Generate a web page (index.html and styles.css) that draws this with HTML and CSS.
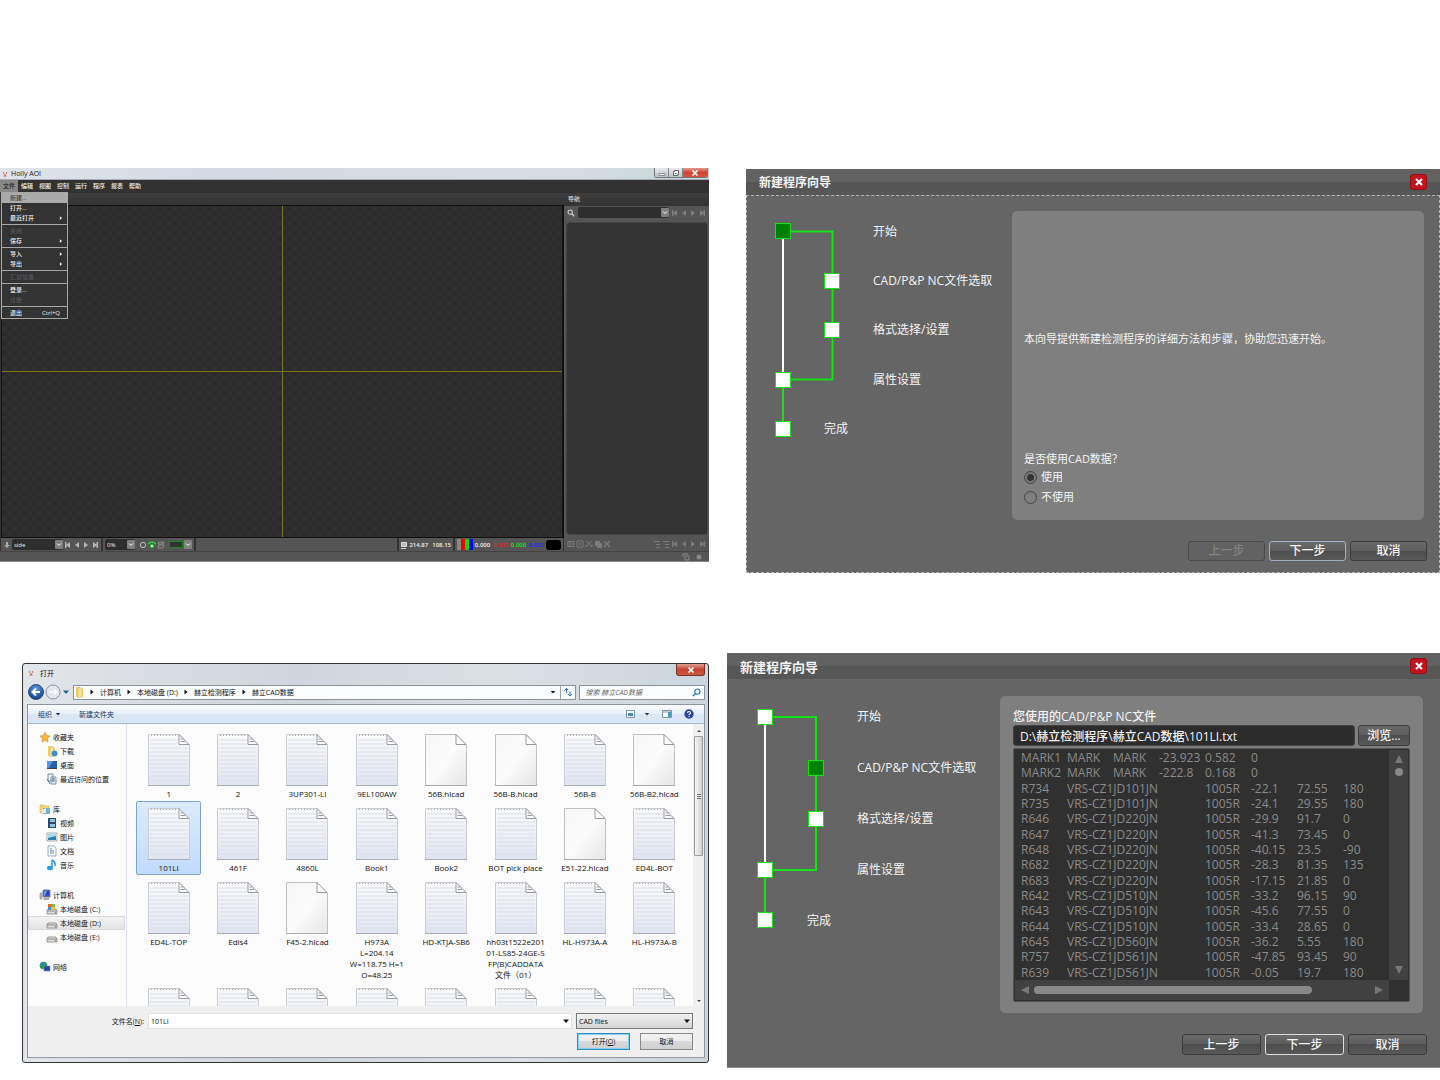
FILE: index.html
```html
<!DOCTYPE html>
<html lang="zh-CN">
<head>
<meta charset="utf-8">
<title>Holly AOI</title>
<link rel="stylesheet" href="styles.css">
</head>
<body>
<svg class="defs" width="0" height="0" aria-hidden="true">
  <defs>
    <linearGradient id="paper" x1="0" y1="0" x2="0" y2="1"><stop offset="0" stop-color="#fafafa"/><stop offset=".6" stop-color="#eceef4"/><stop offset="1" stop-color="#dfe4f1"/></linearGradient>
    <linearGradient id="blank" x1="0" y1="0" x2="1" y2="1"><stop offset="0" stop-color="#f6f6f6"/><stop offset=".5" stop-color="#fbfbfb"/><stop offset="1" stop-color="#e6e6e6"/></linearGradient>
    <radialGradient id="orb" cx=".5" cy=".3" r=".7"><stop offset="0" stop-color="#5d9be0"/><stop offset="1" stop-color="#103f86"/></radialGradient>
    <symbol id="doc" viewBox="0 0 42 53">
      <path d="M.5 1.500H31L41.500 12V52.500H.5z" fill="url(#paper)" stroke="#c9ccd2"/>
      <path d="M3 2.500H30" stroke="#a5a9af" stroke-dasharray="1 2"/>
      <path d="M2 7H30M2 11H30M2 15H40M2 19H40M2 23H40M2 27H40M2 31H40M2 35H40M2 39H40M2 43H40M2 47H40" stroke="#d9deea"/>
      <path d="M0 52.500H42" stroke="#a9adb5"/>
      <path d="M31 1.500V11.500H41z" fill="#fff" stroke="#9599a0"/><path d="M32.500 6H35M32.500 8.500H37" stroke="#999"/>
    </symbol>
    <symbol id="file" viewBox="0 0 42 53">
      <path d="M.5 1.500H31L41.500 12V52.500H.5z" fill="url(#blank)" stroke="#c0c0c0"/>
      <path d="M0 52.500H42" stroke="#adadad"/>
      <path d="M31 1.500V11.500H41z" fill="#fff" stroke="#9599a0"/>
    </symbol>
    <symbol id="logo" viewBox="0 0 8 8"><path d="M2 2.500L3 3.500M6 2.500L5 3.500M4 4V6M2.500 6H5.500" stroke="#e4574c" stroke-width="1.100" fill="none"/></symbol>
    <symbol id="down" viewBox="0 0 8 8"><path d="M1 2.500H7L4 6z" fill="currentColor"/></symbol>
    <symbol id="right" viewBox="0 0 8 8"><path d="M2.500 1.500V6.500L5.500 4z" fill="currentColor"/></symbol>
    <symbol id="left" viewBox="0 0 8 8"><path d="M6 1V7L2 4z" fill="currentColor"/></symbol>
    <symbol id="play" viewBox="0 0 8 8"><path d="M2 1V7L6 4z" fill="currentColor"/></symbol>
    <symbol id="first" viewBox="0 0 8 8"><path d="M1 1H2.500V3.500L6 1V7L2.500 4.500V7H1z" fill="currentColor"/></symbol>
    <symbol id="last" viewBox="0 0 8 8"><path d="M7 1H5.500V3.500L2 1V7L5.500 4.500V7H7z" fill="currentColor"/></symbol>
    <symbol id="drop" viewBox="0 0 8 11"><rect y="1" width="8" height="9" rx="1" fill="#808080"/><path d="M2 4.500L4 6.500L6 4.500" stroke="#fff" fill="none"/></symbol>
    <symbol id="lens" viewBox="0 0 10 10"><circle cx="4" cy="4" r="2.700" fill="none" stroke="currentColor" stroke-width="1.300"/><path d="M6 6L9 9" stroke="currentColor" stroke-width="1.600"/></symbol>
    <symbol id="folder" viewBox="0 0 12 12"><path d="M2 1H6L7 3H9V11H2z" fill="#f0cf6b"/><path d="M4 2H8V11L4 12z" fill="#fae59b" stroke="#d7b24b" stroke-width=".5"/></symbol>
    <symbol id="disk" viewBox="0 0 12 12"><path d="M2 6H10L11 8V11H1V8z" fill="#ddd" stroke="#777" stroke-width=".7"/><path d="M1 8H11" stroke="#888"/><circle cx="9.500" cy="9.700" r=".7" fill="#4a4"/></symbol>
    <symbol id="pc" viewBox="0 0 12 12"><path d="M4 1H11V8H4z" fill="#2446b8" stroke="#889"/><path d="M5 2H8L6 7H5z" fill="#6c93e8"/><path d="M1 4H3V10H1z" fill="#bbb" stroke="#777" stroke-width=".5"/><path d="M5 9H10V11H4z" fill="#aab"/></symbol>
  </defs>
</svg>

<main class="sheet">
  <div class="row row-top">
    <section class="app">
      <header class="app-title">
        <svg class="i8"><use href="#logo"/></svg><h1>Holly AOI</h1>
        <div class="caption">
          <button aria-label="最小化"><svg width="8" height="8"><path d="M1 4.500H7V6.500H1z" fill="#fff" stroke="#555" stroke-width=".6"/></svg></button>
          <button aria-label="还原"><svg width="8" height="8"><path d="M2.500 1.500H6.500V5.500H5.500V6.500H1.500V2.500H2.500z" fill="#fff" stroke="#444" stroke-width=".8"/><path d="M3 4.500H4.500" stroke="#444"/></svg></button>
          <button class="close" aria-label="关闭"><svg width="8" height="8"><path d="M1.500 1.500L6.500 6.500M6.500 1.500L1.500 6.500" stroke="#fff" stroke-width="1.700"/></svg></button>
        </div>
      </header>
      <nav class="menubar">
        <button class="open">文件</button><button>编辑</button><button>视图</button><button>控制</button><button>运行</button><button>程序</button><button>报表</button><button>帮助</button>
        <div class="menu">
          <button class="hot">新建...</button>
          <button>打开...</button>
          <button>最近打开<svg class="i6"><use href="#right"/></svg></button>
          <hr>
          <button disabled>关闭</button>
          <button>保存<svg class="i6"><use href="#right"/></svg></button>
          <hr>
          <button>导入<svg class="i6"><use href="#right"/></svg></button>
          <button>导出<svg class="i6"><use href="#right"/></svg></button>
          <hr>
          <button disabled>汇总信息...</button>
          <hr>
          <button>登录...</button>
          <button disabled>注册</button>
          <hr>
          <button>退出<span>Ctrl+Q</span></button>
        </div>
      </nav>
      <div class="app-body">
        <div class="stage">
          <div class="toolstrip"></div>
          <div class="canvas"></div>
          <div class="playbar">
            <div class="grp">
              <svg class="i8"><path d="M3 1H5V4H7L4 7L1 4H3z" fill="#aaa"/></svg>
              <label class="combo side"><input value="side" aria-label="面"><svg class="drop"><use href="#drop"/></svg></label>
              <svg class="i8"><use href="#first"/></svg><svg class="i8"><use href="#left"/></svg><svg class="i8"><use href="#play"/></svg><svg class="i8"><use href="#last"/></svg>
            </div>
            <div class="grp">
              <label class="combo pct"><input value="0%" aria-label="缩放"><svg class="drop"><use href="#drop"/></svg></label>
              <svg class="i8"><circle cx="4" cy="4" r="2.700" fill="none" stroke="#bbb"/></svg>
              <svg class="i8"><path d="M0 3Q4-1 8 3" fill="none" stroke="#2fd04a" stroke-width="1.500"/><circle cx="4" cy="5" r="2" fill="#9f9" stroke="#1a9c30"/></svg>
              <svg class="i8"><path d="M2 1H7L6 3H1zM2 4H7L6 7H1z" fill="none" stroke="#999" stroke-width=".8"/></svg>
              <span class="swatch"></span><svg class="drop"><use href="#drop"/></svg>
            </div>
            <div class="grp fill"></div>
            <div class="grp coords">
              <svg class="i8"><path d="M1.500 1.500H6.500V5.500H1.500z" fill="#bbb" stroke="#ddd"/><path d="M1 7.500H6" stroke="#ccc"/></svg>
              <span>214.87</span><span>108.15</span>
            </div>
            <div class="grp rgb">
              <span class="bars"></span><b>0.000</b><b class="r">0.000</b><b class="g">0.000</b><b class="b">0.000</b><span class="black"></span>
            </div>
          </div>
        </div>
        <aside class="side-nav">
          <h2>导航</h2>
          <div class="find">
            <svg class="i8"><use href="#lens"/></svg>
            <label class="combo"><input aria-label="查找"><svg class="drop"><use href="#drop"/></svg></label>
            <svg class="i8"><use href="#first"/></svg><svg class="i8"><use href="#left"/></svg><svg class="i8"><use href="#play"/></svg><svg class="i8"><use href="#last"/></svg>
          </div>
          <div class="tree"></div>
          <div class="tree-tools">
            <svg class="i8"><path d="M1 1.500H7V6.500H1zM3 1V7M5 3V5" fill="none" stroke="currentColor"/></svg>
            <svg class="i8"><path d="M1 1H7V7H1zM4 3V5M3 4H5" fill="none" stroke="currentColor"/></svg>
            <svg class="i8"><path d="M1 1L7 6M7 1L1 6M0 6H3M5 6H8" fill="none" stroke="currentColor"/></svg>
            <svg class="i8"><path d="M1 1H6V3H8V8H3V6H1z" fill="currentColor"/></svg>
            <svg class="i8"><path d="M1 1L7 7M7 1L1 7" stroke="currentColor" stroke-width="1.400"/></svg>
            <span class="grow"></span>
            <svg class="i8"><path d="M1 1.500H7M3 4.500H7M3 7.500H7" stroke="currentColor"/></svg>
            <svg class="i8"><path d="M1 1.500H7M3 4.500H7M3 7.500H7" stroke="currentColor"/></svg>
            <svg class="i8"><use href="#first"/></svg><svg class="i8"><use href="#left"/></svg><svg class="i8"><use href="#play"/></svg><svg class="i8"><use href="#last"/></svg>
          </div>
        </aside>
      </div>
      <footer class="app-status">
        <svg class="i8"><path d="M1 1H6M3 3H7V7H3zM1 1V4" fill="none" stroke="#888"/></svg>
        <svg class="i8"><circle cx="4" cy="4" r="2.500" fill="#888"/></svg>
      </footer>
    </section>

    <section class="wizard wizard-start">
      <header><h2>新建程序向导</h2><button class="x" aria-label="关闭"><svg width="8" height="8"><path d="M1 1L7 7M7 1L1 7" stroke="#fff" stroke-width="2"/></svg></button></header>
      <div class="wizard-body">
        <div class="wizard-main">
          <svg class="rail" width="50" height="247" fill="#fff" stroke="#16e016">
            <path d="M9 24V173" stroke="#fff" stroke-width="2"/>
            <path d="M9 24.500H58.500V172.500H9M9 173V222" fill="none" stroke-width="2"/>
            <rect class="now" x="1.500" y="16.500" width="15" height="15"/><rect x="50.500" y="66.500" width="15" height="15"/><rect x="50.500" y="115.500" width="15" height="15"/><rect x="1.500" y="165.500" width="15" height="15"/><rect x="1.500" y="214.500" width="15" height="15"/>
          </svg>
          <ol><li>开始</li><li>CAD/P&amp;P NC文件选取</li><li>格式选择/设置</li><li>属性设置</li><li>完成</li></ol>
          <div class="pane">
            <p>本向导提供新建检测程序的详细方法和步骤，协助您迅速开始。</p>
            <fieldset>
              <legend>是否使用CAD数据？</legend>
              <label><input type="radio" name="cad" checked>使用</label>
              <label><input type="radio" name="cad">不使用</label>
            </fieldset>
          </div>
        </div>
        <div class="actions"><button disabled>上一步</button><button class="default">下一步</button><button>取消</button></div>
      </div>
    </section>
  </div>

  <div class="row row-bottom">
    <section class="dialog">
      <header class="dialog-title"><svg class="i8"><use href="#logo"/></svg><h2>打开</h2><button aria-label="关闭"><svg width="8" height="8"><path d="M1.500 1.500L6.500 6.500M6.500 1.500L1.500 6.500" stroke="#fff" stroke-width="1.700"/></svg></button></header>
      <div class="address">
        <svg class="travel" width="42" height="16">
          <circle cx="8" cy="8" r="7.500" fill="url(#orb)" stroke="#34527c"/><path d="M12 8H5M8 4.500L4.500 8L8 11.500" fill="none" stroke="#fff" stroke-width="2"/>
          <circle cx="25" cy="8" r="7" fill="#e3e7ec" stroke="#8b97a6"/><path d="M21 8H28M26 5.500L29 8L26 10.500" fill="none" stroke="#fff" stroke-width="1.500"/>
          <path d="M35 6.500H41L38 10z" fill="#1c5c94"/>
        </svg>
        <div class="crumbs">
          <svg class="folder" width="10" height="12"><use href="#folder" width="12" height="12"/></svg>
          <svg class="i8"><use href="#right"/></svg><a href="#">计算机</a>
          <svg class="i8"><use href="#right"/></svg><a href="#">本地磁盘 (D:)</a>
          <svg class="i8"><use href="#right"/></svg><a href="#">赫立检测程序</a>
          <svg class="i8"><use href="#right"/></svg><a href="#">赫立CAD数据</a>
          <span class="grow"></span><svg class="i6"><use href="#down"/></svg>
          <button class="refresh" aria-label="刷新"><svg width="10" height="10"><path d="M3.500 1V5.500M1.500 3.500L3.500 1.500L5 3M7 9V4.500M5 7L7 9L9 7" fill="none" stroke="#2d6fc0"/></svg></button>
        </div>
        <div class="search"><input type="search" placeholder="搜索 赫立CAD数据" aria-label="搜索"><svg class="lens" width="9" height="9" viewBox="0 0 10 10"><circle cx="6" cy="4" r="2.900" fill="none" stroke="#2c7bc4" stroke-width="1.300"/><path d="M4 6L1 9" stroke="#2c7bc4" stroke-width="1.600"/></svg></div>
      </div>
      <div class="dialog-body">
        <div class="commands">
          <button>组织<svg class="i6"><use href="#down"/></svg></button><button>新建文件夹</button><span class="grow"></span>
          <svg width="10" height="8"><path d="M.5.5H8.500V7.500H.5z" fill="#fff" stroke="#7a93ad"/><path d="M2 3H7V6H2z" fill="#3f8fb5"/></svg>
          <svg class="i6"><use href="#down"/></svg>
          <svg class="view" width="10" height="8"><path d="M.5.5H9.500V7.500H.5zM.5 2H9" fill="#fff" stroke="#7f93a8"/><path d="M6 2H9V7H6z" fill="#3b9fc4"/></svg>
          <svg width="10" height="10"><circle cx="5" cy="5" r="4.700" fill="#2a46a0"/><path d="M3.500 4Q3.500 2.500 5 2.500T6.500 4Q6.500 5 5 5.500V6M5 7V8" fill="none" stroke="#fff" stroke-width="1.100"/></svg>
        </div>
        <div class="browser">
          <nav class="places">
            <ul>
              <li class="top"><svg class="i12"><path d="M6 1L7.500 4.500L11 5L8.500 7.500L9 11L6 9.300L3 11L3.500 7.500L1 5L4.500 4.500z" fill="#f8b53a" stroke="#d88c1c" stroke-width=".6"/></svg>收藏夹</li>
              <li><svg class="i12"><use href="#folder"/><circle cx="8.500" cy="8.500" r="3" fill="#3b8fd0"/></svg>下载</li>
              <li><svg class="i12"><path d="M1 2H11V9H1z" fill="#2460b0"/><path d="M1 2H7L3 9H1z" fill="#5b95d8"/><path d="M1 9.500H11" stroke="#444"/></svg>桌面</li>
              <li><svg class="i12"><path d="M2 1H7V8H2zM5 4H10V11H5z" fill="#e8eef4" stroke="#7c93a8"/><path d="M1 6L4 11M6 6H9M6 8H9" stroke="#4f82a8"/></svg>最近访问的位置</li>
            </ul>
            <ul>
              <li class="top"><svg class="i12"><path d="M1 2H5L6 3H10V10H1z" fill="#f3d777" stroke="#cfab4c" stroke-width=".5"/><path d="M4 5H11V11H4z" fill="#6fb4d8"/><path d="M3 7L7 5V10H3z" fill="#e9f2e0"/></svg>库</li>
              <li><svg class="i12"><path d="M2 1H10V11H2z" fill="#2c4a6b"/><path d="M4 2H9V5H4zM4 7H9V10H4z" fill="#8fc2e2"/></svg>视频</li>
              <li><svg class="i12"><path d="M1 2H11V10H1z" fill="#fff" stroke="#8796a5" stroke-width=".8"/><path d="M2 4H10V9H2z" fill="#2c7fa8"/><path d="M2 3H10V5L2 7z" fill="#a9dcec"/></svg>图片</li>
              <li><svg class="i12"><path d="M2 1H8L10 3V11H2z" fill="#f6f9fc" stroke="#8aa0b8" stroke-width=".8"/><path d="M4 4H6M4 6H8M4 8H8" stroke="#5f88b5"/></svg>文档</li>
              <li><svg class="i12"><path d="M6 1V9M6 1Q10 3 9 7" fill="none" stroke="#2b8fd4" stroke-width="1.400"/><ellipse cx="4" cy="9" rx="3" ry="2.200" fill="#2b9be0"/></svg>音乐</li>
            </ul>
            <ul>
              <li class="top"><svg class="i12"><use href="#pc"/></svg>计算机</li>
              <li><svg class="i12"><use href="#disk"/><path d="M2 1H5V4H2z" fill="#e2662b"/><path d="M5 1H9V4H5z" fill="#7fba42"/><path d="M2 4H5V7H2z" fill="#3d93d6"/><path d="M5 4H9V7H5z" fill="#f3bf35"/></svg>本地磁盘 (C:)</li>
              <li class="sel"><svg class="i12"><use href="#disk"/></svg>本地磁盘 (D:)</li>
              <li><svg class="i12"><use href="#disk"/></svg>本地磁盘 (E:)</li>
            </ul>
            <ul>
              <li class="top"><svg class="i12"><circle cx="4.500" cy="4.500" r="3.800" fill="#2d9c4a"/><path d="M1 4Q4 0 6 2L4 5z" fill="#2b7fd6"/><path d="M5 5H11V10H5z" fill="#1c48b4" stroke="#889" stroke-width=".7"/></svg>网络</li>
            </ul>
          </nav>
          <div class="files">
            <figure><svg><use href="#doc"/></svg><figcaption>1</figcaption></figure>
            <figure><svg><use href="#doc"/></svg><figcaption>2</figcaption></figure>
            <figure><svg><use href="#doc"/></svg><figcaption>3UP301-LI</figcaption></figure>
            <figure><svg><use href="#doc"/></svg><figcaption>9EL100AW</figcaption></figure>
            <figure><svg><use href="#file"/></svg><figcaption>56B.hlcad</figcaption></figure>
            <figure><svg><use href="#file"/></svg><figcaption>56B-B.hlcad</figcaption></figure>
            <figure><svg><use href="#doc"/></svg><figcaption>56B-B</figcaption></figure>
            <figure><svg><use href="#file"/></svg><figcaption>56B-B2.hlcad</figcaption></figure>
            <figure class="sel"><svg><use href="#doc"/></svg><figcaption>101LI</figcaption></figure>
            <figure><svg><use href="#doc"/></svg><figcaption>461F</figcaption></figure>
            <figure><svg><use href="#doc"/></svg><figcaption>4860L</figcaption></figure>
            <figure><svg><use href="#doc"/></svg><figcaption>Book1</figcaption></figure>
            <figure><svg><use href="#doc"/></svg><figcaption>Book2</figcaption></figure>
            <figure><svg><use href="#doc"/></svg><figcaption>BOT pick place</figcaption></figure>
            <figure><svg><use href="#file"/></svg><figcaption>E51-22.hlcad</figcaption></figure>
            <figure><svg><use href="#doc"/></svg><figcaption>ED4L-BOT</figcaption></figure>
            <figure><svg><use href="#doc"/></svg><figcaption>ED4L-TOP</figcaption></figure>
            <figure><svg><use href="#doc"/></svg><figcaption>Edis4</figcaption></figure>
            <figure><svg><use href="#file"/></svg><figcaption>F45-2.hlcad</figcaption></figure>
            <figure><svg><use href="#doc"/></svg><figcaption>H973A<br>L=204.14<br>W=118.75 H=1<br>O=48.25</figcaption></figure>
            <figure><svg><use href="#doc"/></svg><figcaption>HD-KTJA-SB6</figcaption></figure>
            <figure><svg><use href="#doc"/></svg><figcaption>hh03t1522e201<br>01-LS85-24GE-S<br>FP(B)CADDATA<br>文件（01）</figcaption></figure>
            <figure><svg><use href="#doc"/></svg><figcaption>HL-H973A-A</figcaption></figure>
            <figure><svg><use href="#doc"/></svg><figcaption>HL-H973A-B</figcaption></figure>
            <figure><svg><use href="#doc"/></svg></figure>
            <figure><svg><use href="#doc"/></svg></figure>
            <figure><svg><use href="#doc"/></svg></figure>
            <figure><svg><use href="#doc"/></svg></figure>
            <figure><svg><use href="#doc"/></svg></figure>
            <figure><svg><use href="#doc"/></svg></figure>
            <figure><svg><use href="#doc"/></svg></figure>
            <figure><svg><use href="#doc"/></svg></figure>
          </div>
          <div class="vscroll"><svg width="6" height="6"><path d="M1 4H5L3 2z" fill="#444"/></svg><div class="thumb"><svg width="4" height="5"><path d="M0 .5H4M0 2.500H4M0 4.500H4" stroke="#777"/></svg></div><svg width="6" height="6"><path d="M1 2H5L3 4z" fill="#444"/></svg></div>
        </div>
        <form class="dialog-foot">
          <label for="fname">文件名(<u>N</u>):</label>
          <div class="field"><input id="fname" value="101LI"><svg class="i8"><use href="#down"/></svg></div>
          <div class="field pick"><select aria-label="文件类型"><option>CAD files</option></select><svg class="i8"><use href="#down"/></svg></div>
          <div class="buttons"><button type="button" class="default">打开(<u>O</u>)</button><button type="button">取消</button></div>
        </form>
      </div>
    </section>

    <section class="wizard wizard-file">
      <header><h2>新建程序向导</h2><button class="x" aria-label="关闭"><svg width="8" height="8"><path d="M1 1L7 7M7 1L1 7" stroke="#fff" stroke-width="2"/></svg></button></header>
      <div class="wizard-body">
        <div class="wizard-main">
          <svg class="rail" width="51" height="254" fill="#fff" stroke="#16e016">
            <path d="M9 25V178" stroke="#fff" stroke-width="2"/>
            <path d="M9 25H60V178H9M9 178V228" fill="none" stroke-width="2"/>
            <rect x="1.500" y="17.500" width="15" height="15"/><rect class="now" x="52.500" y="68.500" width="15" height="15"/><rect x="52.500" y="119.500" width="15" height="15"/><rect x="1.500" y="170.500" width="15" height="15"/><rect x="1.500" y="220.500" width="15" height="15"/>
          </svg>
          <ol><li>开始</li><li>CAD/P&amp;P NC文件选取</li><li>格式选择/设置</li><li>属性设置</li><li>完成</li></ol>
          <div class="pane">
            <label for="path">您使用的CAD/P&amp;P NC文件</label>
            <div class="pathrow"><input id="path" value="D:\赫立检测程序\赫立CAD数据\101LI.txt"><button>浏览...</button></div>
            <div class="list">
              <table>
                <colgroup><col><col><col><col><col><col><col><col></colgroup>
                <tbody>
                <tr><td>MARK1</td><td>MARK</td><td>MARK</td><td>-23.923</td><td>0.582</td><td>0</td><td></td><td></td></tr>
                <tr><td>MARK2</td><td>MARK</td><td>MARK</td><td>-222.8</td><td>0.168</td><td>0</td><td></td><td></td></tr>
                <tr><td>R734</td><td colspan="3">VRS-CZ1JD101JN</td><td>1005R</td><td>-22.1</td><td>72.55</td><td>180</td></tr>
                <tr><td>R735</td><td colspan="3">VRS-CZ1JD101JN</td><td>1005R</td><td>-24.1</td><td>29.55</td><td>180</td></tr>
                <tr><td>R646</td><td colspan="3">VRS-CZ1JD220JN</td><td>1005R</td><td>-29.9</td><td>91.7</td><td>0</td></tr>
                <tr><td>R647</td><td colspan="3">VRS-CZ1JD220JN</td><td>1005R</td><td>-41.3</td><td>73.45</td><td>0</td></tr>
                <tr><td>R648</td><td colspan="3">VRS-CZ1JD220JN</td><td>1005R</td><td>-40.15</td><td>23.5</td><td>-90</td></tr>
                <tr><td>R682</td><td colspan="3">VRS-CZ1JD220JN</td><td>1005R</td><td>-28.3</td><td>81.35</td><td>135</td></tr>
                <tr><td>R683</td><td colspan="3">VRS-CZ1JD220JN</td><td>1005R</td><td>-17.15</td><td>21.85</td><td>0</td></tr>
                <tr><td>R642</td><td colspan="3">VRS-CZ1JD510JN</td><td>1005R</td><td>-33.2</td><td>96.15</td><td>90</td></tr>
                <tr><td>R643</td><td colspan="3">VRS-CZ1JD510JN</td><td>1005R</td><td>-45.6</td><td>77.55</td><td>0</td></tr>
                <tr><td>R644</td><td colspan="3">VRS-CZ1JD510JN</td><td>1005R</td><td>-33.4</td><td>28.65</td><td>0</td></tr>
                <tr><td>R645</td><td colspan="3">VRS-CZ1JD560JN</td><td>1005R</td><td>-36.2</td><td>5.55</td><td>180</td></tr>
                <tr><td>R757</td><td colspan="3">VRS-CZ1JD561JN</td><td>1005R</td><td>-47.85</td><td>93.45</td><td>90</td></tr>
                <tr><td>R639</td><td colspan="3">VRS-CZ1JD561JN</td><td>1005R</td><td>-0.05</td><td>19.7</td><td>180</td></tr>
                </tbody>
              </table>
              <div class="vbar"><svg width="10" height="28"><path d="M1 10H9L5 2z" fill="#777"/><circle cx="5" cy="19" r="4" fill="#888"/></svg><svg width="10" height="10"><path d="M1 1H9L5 9z" fill="#777"/></svg></div>
              <div class="hbar"><svg width="8" height="8"><path d="M8 0V8L0 4z" fill="#777"/></svg><div class="thumb"></div><svg width="8" height="8"><path d="M0 0V8L8 4z" fill="#777"/></svg></div>
            </div>
          </div>
        </div>
        <div class="actions"><button>上一步</button><button class="default">下一步</button><button>取消</button></div>
      </div>
    </section>
  </div>
</main>
</body>
</html>
```

FILE: styles.css
```css
*, *::before, *::after { box-sizing: border-box; }
body { margin: 0; background: #fff; font-family: "Open Sans", "Noto Sans CJK SC", sans-serif; color: #000; }
h1, h2, p, ol, ul, figure, fieldset, hr { margin: 0; padding: 0; border: 0; list-style: none; font-weight: 400; }
button, input, select { font: inherit; color: inherit; margin: 0; padding: 0; border: 0; background: none; min-width: 0; }
svg { flex: none; display: block; }
.defs { position: absolute; }
.grow { flex: 1; }
.i6 { width: 6px; height: 6px; }
.i8 { width: 8px; height: 8px; }
.i12 { width: 12px; height: 12px; }

.sheet { padding-top: 168px; }
.row { display: flex; align-items: flex-start; }
.row-top { gap: 37px; }
.row-bottom { gap: 18px; padding: 0 0 12px 22px; margin-top: 80px; }

/* main application window */
.app { flex: 709 1 0; min-width: 0; background: #333; color: #eee; font-size: 6px; font-weight: 500; line-height: 10px; }
.app-title { display: flex; align-items: center; height: 12px; padding-left: 1px; background: linear-gradient(90deg, #dfe4ea, #d3dae3 30%, #d6dde2 80%, #c4d6d9); color: #222; border-bottom: 1px solid #aab; }
.app-title h1 { font-size: 7px; padding-left: 2px; flex: 1; }
.caption { display: flex; align-self: flex-start; height: 10px; margin-right: 1px; border: 1px solid #777; border-top: 0; border-radius: 0 0 2px 2px; overflow: hidden; }
.caption button { width: 14px; display: grid; place-items: center; border-right: 1px solid #888; background: linear-gradient(#e6e9ed, #bcc3cb); }
.caption .close { width: 24px; border: 0; background: linear-gradient(#e29a89, #cf4532 50%, #d9533c); }
.menubar { position: relative; display: flex; height: 13px; background: #323232; }
.menubar > button { padding: 0 3px; height: 12px; }
.menubar > .open { background: #888; color: #222; }
.menu { position: absolute; z-index: 1; left: 1px; top: 12px; width: 67px; border: 1px solid #a8a8a8; background: #333; }
.menu button { display: flex; align-items: center; justify-content: space-between; width: 100%; height: 10px; padding: 0 3px 0 8px; }
.menu button span { padding-right: 4px; }
.menu .hot { background: #aaa; color: #444; }
.menu button:disabled { color: #585858; }
.menu hr { height: 1px; margin: 1px 0; background: #a8a8a8; }
.app-body { display: flex; }
.stage { flex: 564 1 0; min-width: 0; }
.toolstrip { height: 12px; background: linear-gradient(#3e3e3e, #343434); }
.canvas { height: 333px; margin-left: 1px; border: 1px solid #111; border-right-width: 2px;
  background:
    linear-gradient(#77771a, #77771a) 50% 0 / 1px 100% no-repeat,
    linear-gradient(#77771a, #77771a) 0 50% / 100% 1px no-repeat,
    repeating-conic-gradient(#2b2b2b 0 25%, #2f2f2f 0 50%) 0 0 / 10px 10px; }
.playbar { display: flex; gap: 2px; height: 13px; padding: 0 1px; background: #333; }
.grp { display: flex; align-items: center; gap: 1px; padding: 0 2px; background: #555; }
.grp > svg { color: #b4b4b4; }
.grp.fill { flex: 1; }
.combo { display: flex; align-items: center; height: 11px; background: #2e2e2e; border-radius: 2px; }
.combo input { flex: 1; width: 0; padding-left: 2px; }
.drop { width: 8px; height: 11px; }
.side { width: 51px; }
.pct { width: 30px; margin-right: 3px; }
.swatch { width: 14px; height: 7px; border: 1px solid #138c13; background: #333; margin-left: 3px; }
.coords { gap: 4px; padding: 0 2px 0 1px; }
.coords span { font-weight: 600; }
.coords svg { margin-right: -3px; }
.rgb b { width: 17px; font-weight: 600; text-align: center; white-space: nowrap; }
.rgb .r { color: #f02020; }
.rgb .g { color: #10e810; }
.rgb .b { color: #2424ff; }
.bars { width: 16px; height: 11px; background: linear-gradient(90deg, #888 4px, #e00 4px 8px, #0d0 8px 12px, #00f 12px); }
.black { width: 15px; height: 10px; border-radius: 3px; background: #000; }
.side-nav { flex: 145 1 0; min-width: 0; display: flex; flex-direction: column; background: #555; }
.side-nav h2 { font-size: 6px; height: 12px; line-height: 12px; padding-left: 4px; background: linear-gradient(#3e3e3e, #343434); }
.find { display: flex; align-items: center; gap: 1px; height: 14px; padding: 0 3px; color: #ccc; border-top: 1px solid #333; }
.find .combo { flex: 1; margin: 0 1px 0 2px; }
.find > svg ~ svg { color: #7d7d7d; }
.tree { flex: 1; margin: 4px 2px 2px 3px; background: #333; border-radius: 3px; box-shadow: 0 0 0 1px #444; }
.tree-tools { display: flex; align-items: center; gap: 1px; height: 15px; padding: 0 3px; color: #7b7b7b; }
.app-status { display: flex; justify-content: flex-end; align-items: center; gap: 5px; height: 11px; padding-right: 6px; background: #555; border-top: 1px solid #444; border-bottom: 1px solid #888; }

/* wizards */
.wizard { min-width: 0; background: #656565; color: #f4f4f4; font-size: 12px; font-weight: 500; line-height: 16px; }
.wizard-start { flex: 694 1 0; margin-top: 1px; }
.wizard-file { flex: 1 1 713px; border-bottom: 1px solid #888; }
.wizard header { display: flex; align-items: center; justify-content: space-between; height: 26px; padding: 0 13px; background: linear-gradient(#626262 0 13px, #565656 13px); }
.wizard h2 { font-size: 12px; font-weight: 700; padding-top: 2px; }
.wizard-file h2 { font-size: 13px; }
.x { width: 17px; height: 16px; display: grid; place-items: center; border: 1px solid #8e1010; border-radius: 3px; background: #c41420; }
.wizard-start .wizard-body { border: 1px dashed #b4b4b4; }
.wizard-main { display: flex; align-items: flex-start; }
.wizard-start .wizard-main { padding: 15px 15px 0 27px; }
.wizard-file .wizard-main { padding: 17px 17px 0 29px; }
.rail { overflow: visible; margin-top: -4px; }
.now { fill: #008000; }
.wizard ol { display: grid; grid-template-rows: repeat(5, 1fr); align-items: center; flex: 1; height: 247px; margin-top: -4px; white-space: nowrap; }
.wizard-file ol { height: 254px; }
.wizard li { padding-left: 49px; }
.wizard-file li { padding-left: 50px; }
.wizard li:last-child { padding-left: 0; }
.pane { display: flex; flex-direction: column; background: #7f7f7f; border-radius: 5px; }
.wizard-start .pane { flex: 0 0 412px; height: 309px; padding: 0 12px 13px; font-size: 11px; }
.pane p { margin: auto 0; padding-top: 16px; }
.pane fieldset { display: flex; flex-direction: column; }
.pane legend { padding: 0; line-height: 16px; }
.pane fieldset label { display: flex; align-items: center; gap: 4px; height: 20px; }
.pane input[type=radio] { appearance: none; width: 13px; height: 13px; border: 1px solid #444; border-radius: 50%; }
.pane input[type=radio]:checked { background: radial-gradient(#333 0 3px, #777 4px); }
.actions { display: flex; justify-content: flex-end; gap: 4px; padding: 21px 12px 11px; }
.wizard-file .actions { padding: 21px 13px 12px; }
.actions button, .pathrow button { height: 20px; width: 77px; border: 1px solid #3c3c3c; border-radius: 3px; background: linear-gradient(#6a6a6a, #5c5c5c 50%, #4e4e4e 50%, #585858); }
.wizard-file .actions button { height: 21px; width: 79px; }
.actions .default { border-color: #9fb0c4; }
.wizard-file .actions .default { border-color: #ddd; }
.actions button:disabled { color: #828282; background: #626262; border-color: #4c4c4c; }
.wizard-file .pane { flex: 0 0 423px; height: 317px; padding: 13px 13px 0; }
.pathrow { display: flex; gap: 3px; margin-bottom: 2px; }
.pathrow input { flex: 1; height: 21px; padding-left: 6px; background: #2c2c2c; border: 1px solid #444; border-radius: 3px; }
.pathrow button { width: 52px; height: 21px; }
.list { display: grid; grid-template-columns: 1fr 19px; grid-template-rows: 230px 20px; padding: 1px; background: #303030; border: 1px solid #555; border-radius: 2px; color: #8a8a8a; font-weight: 400; }
.list table { width: 100%; height: 230px; padding-left: 6px; table-layout: fixed; border-spacing: 0; line-height: 15px; white-space: nowrap; }
.list td { padding: 0; }
.vbar { display: flex; flex-direction: column; align-items: center; justify-content: space-between; padding: 3px 0 5px; background: #414141; }
.hbar { display: flex; align-items: center; gap: 5px; padding: 0 6px; background: #414141; }
.hbar .thumb { flex: 0 1 278px; height: 8px; border-radius: 4px; background: #888; margin-right: auto; }

/* file-open dialog */
.dialog { flex: 1 1 687px; min-width: 0; margin-top: 10px; padding: 0 3px 4px 4px; border: 1px solid #333; border-radius: 3px; background: linear-gradient(90deg, #e2e5ea, #cfd5dc 40%, #dbe0e5 70%, #cbd5db); font-size: 7px; line-height: 11px; color: #111; }
.dialog-title { display: flex; align-items: center; height: 18px; }
.dialog-title h2 { flex: 1; font-size: 7px; padding-left: 5px; }
.dialog-title button { align-self: flex-start; width: 29px; height: 12px; display: grid; place-items: center; border: 1px solid #7a3326; border-top: 0; border-radius: 0 0 3px 3px; background: linear-gradient(#e0a093, #c2452f 50%, #cf5a40); }
.address { display: flex; align-items: center; gap: 3px; height: 22px; padding: 0 0 2px 1px; }
.crumbs { display: flex; align-items: center; gap: 4px; flex: 1 1 502px; height: 15px; border: 1px solid #8a949e; background: #fafcfd; }
.crumbs a { color: inherit; text-decoration: none; white-space: nowrap; }
.refresh { display: grid; place-items: center; width: 15px; height: 13px; border-left: 1px solid #9aa4ae; }
.search { display: flex; align-items: center; flex: 1 1 126px; height: 15px; border: 1px solid #8a949e; background: #fafcfd; padding: 0 3px 0 6px; }
.search input { flex: 1; width: 0; font-style: italic; appearance: none; }
.search input::placeholder { color: #666; opacity: 1; }
.dialog-body { border: 1px solid #8d96a0; background: #fcfcfc; }
.commands { display: flex; align-items: center; gap: 8px; height: 19px; padding: 0 10px; background: linear-gradient(#fbfdff, #e6eef9 50%, #dce7f5 50%, #dbe6f4); border-bottom: 1px solid #a9b8c9; color: #1e395b; }
.commands button { display: flex; align-items: center; gap: 3px; margin-right: 10px; }
.commands .view { margin: 0 4px; }
.browser { display: flex; height: 282px; overflow: hidden; }
.places { flex: 0 0 99px; padding-top: 6px; border-right: 1px solid #dce3ee; }
.places ul + ul { margin-top: 16px; }
.places li { display: flex; align-items: center; gap: 2px; height: 14px; padding-left: 18px; white-space: nowrap; }
.places .top { padding-left: 11px; }
.places .sel { background: linear-gradient(#f4f4f4, #e4e4e4); border: 1px solid #d9d9d9; padding-left: 17px; margin: 0 1px 0 0; }
.files { flex: 1; display: grid; grid-template-columns: repeat(8, 1fr); grid-auto-rows: max-content; align-content: start; padding: 3px 4px 0 7px; font-size: 8px; }
.files figure { min-width: 0; min-height: 74px; margin: 0 2px; padding: 5px 0 0; border: 1px solid transparent; border-radius: 2px; text-align: center; white-space: nowrap; }
.files figure svg { width: 42px; height: 53px; margin: 0 auto 2px; }
.files .sel { background: linear-gradient(#dcebfc, #c1dbfc); border-color: #7da2ce; }
.vscroll { display: flex; flex-direction: column; align-items: center; gap: 2px; flex: 0 0 11px; padding: 4px 0 2px; background: #f0f0f0; }
.vscroll .thumb { width: 9px; height: 120px; margin-bottom: auto; display: grid; place-items: center; border: 1px solid #999; border-radius: 1px; background: linear-gradient(90deg, #f5f5f5, #d0d0d0); }
.dialog-foot { display: grid; grid-template-columns: 116px 1fr 117px; column-gap: 4px; row-gap: 4px; padding: 7px 11px 7px 0; background: #f0f0f0; align-items: center; }
.dialog-foot label { text-align: right; }
.field { position: relative; display: flex; height: 16px; background: #fff; border: 1px solid #e3e3e3; }
.field input, .field select { flex: 1; width: 0; padding-left: 2px; appearance: none; }
.field svg { position: absolute; right: 1px; top: 3px; }
.pick { border-color: #777; background: linear-gradient(#f2f2f2, #d4d4d4); }
.buttons { grid-column: 2 / -1; justify-self: end; display: flex; gap: 10px; }
.buttons button { width: 53px; height: 17px; border: 1px solid #8a8a8a; background: linear-gradient(#f2f2f2, #ebebeb 50%, #dadada 50%, #d0d0d0); }
.buttons .default { border: 1px solid #2f8fc0; box-shadow: inset 0 0 0 1px #7fd2f2; }
```
